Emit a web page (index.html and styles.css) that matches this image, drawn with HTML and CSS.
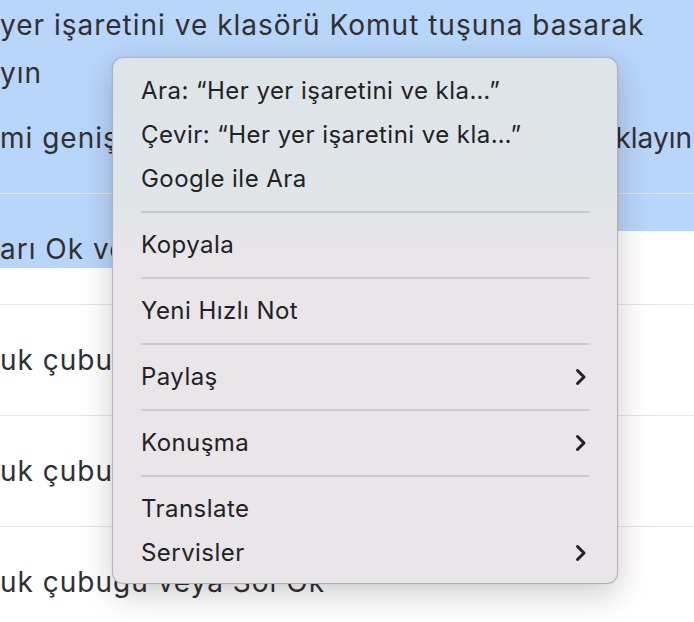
FILE: index.html
```html
<!DOCTYPE html>
<html lang="tr">
<head>
<meta charset="UTF-8" />
<meta name="viewport" content="width=device-width, initial-scale=1" />
<title>Klavye Kısayolları</title>
<link rel="stylesheet" href="styles.css">
</head>
<body>

<div class="page">
  <div class="row row-first selected">
    <p class="line">yer işaretini ve klasörü Komut tuşuna basarak</p>
    <p class="line">yın</p>
    <p class="line line-split gap"><span>mi genişletmek için</span><span class="tight">tıklayın</span></p>
  </div>
  <div class="row row-partial">
    <p class="line"><span class="sel">arı Ok veya Yukarı</span> Ok</p>
  </div>
  <div class="row">
    <p class="line">uk çubuğu veya Sağ Ok</p>
  </div>
  <div class="row">
    <p class="line">uk çubuğu veya Aşağı Ok</p>
  </div>
  <div class="row">
    <p class="line">uk çubuğu veya Sol Ok</p>
  </div>
</div>

<div class="context-menu">
  <div class="menu-item">Ara: “Her yer işaretini ve kla…”</div>
  <div class="menu-item">Çevir: “Her yer işaretini ve kla…”</div>
  <div class="menu-item">Google ile Ara</div>
  <div class="menu-sep"></div>
  <div class="menu-item">Kopyala</div>
  <div class="menu-sep"></div>
  <div class="menu-item">Yeni Hızlı Not</div>
  <div class="menu-sep"></div>
  <div class="menu-item">Paylaş
    <svg class="chevron" viewBox="0 0 12 18"><path d="M2.5 2.5 L9 9 L2.5 15.5" /></svg>
  </div>
  <div class="menu-sep"></div>
  <div class="menu-item">Konuşma
    <svg class="chevron" viewBox="0 0 12 18"><path d="M2.5 2.5 L9 9 L2.5 15.5" /></svg>
  </div>
  <div class="menu-sep"></div>
  <div class="menu-item">Translate</div>
  <div class="menu-item">Servisler
    <svg class="chevron" viewBox="0 0 12 18"><path d="M2.5 2.5 L9 9 L2.5 15.5" /></svg>
  </div>
</div>

</body>
</html>
```

FILE: styles.css
```css
html, body {
  margin: 0;
  padding: 0;
}
body {
  width: 694px;
  height: 622px;
  overflow: hidden;
  background: #fff;
  font-family: Inter, 'Noto Sans', sans-serif;
  position: relative;
}
.page {
  color: #303032;
  font-size: 28px;
  letter-spacing: 1px;
}
.row {
  padding: 31px 0;
  border-top: 1px solid rgba(0, 0, 0, 0.1);
}
.row-first {
  padding-top: 1px;
  border-top: none;
}
.selected {
  background: #b8d5fa;
}
/* selection runs past the first row into the top of the second */
.row-partial {
  background: linear-gradient(#b8d5fa 0, #b8d5fa 37px, transparent 37px);
}
.sel {
  background: #b8d5fa;
  padding: 2px 0;
}
.line {
  margin: 0;
  line-height: 48px;
  white-space: nowrap;
}
.gap {
  margin-top: 17px;
}
.line-split {
  display: flex;
  justify-content: space-between;
  padding-right: 2px;
}
.tight {
  letter-spacing: 0;
}

.context-menu {
  position: absolute;
  left: 112px;
  top: 57px;
  width: 506px;
  box-sizing: border-box;
  padding: 11px 0 8px;
  border: 1px solid rgba(0, 0, 0, 0.22);
  border-radius: 11px;
  background: linear-gradient(#dde5e8 0, #e0e5e8 140px, #e9e5e9 200px, #e9e5e9 100%);
  box-shadow: 0 10px 32px rgba(0, 0, 0, 0.2), 0 0 2px rgba(0, 0, 0, 0.08);
  color: #222224;
  font-size: 24px;
  letter-spacing: 0.45px;
}
.menu-item {
  height: 44px;
  line-height: 44px;
  padding: 0 30px 0 28px;
  display: flex;
  justify-content: space-between;
  align-items: center;
  white-space: nowrap;
}
.menu-sep {
  height: 2px;
  margin: 10px 28px;
  background: rgba(0, 0, 0, 0.12);
}
.chevron {
  width: 12px;
  height: 18px;
}
.chevron path {
  fill: none;
  stroke: #222224;
  stroke-width: 3;
  stroke-linecap: round;
  stroke-linejoin: round;
}
```
